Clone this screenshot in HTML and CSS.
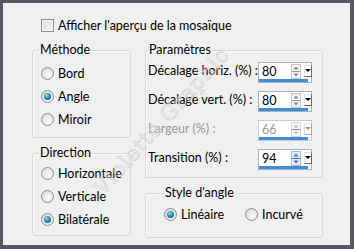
FILE: index.html
```html
<!DOCTYPE html>
<html lang="fr">
<head>
  <meta charset="UTF-8" />
  <meta name="viewport" content="width=device-width, initial-scale=1.0" />
  <title>Mosaïque</title>
  <link rel="stylesheet" href="styles.css">
</head>
<body>
  <div class="dialog">
    <div class="check-row"><span class="checkbox"></span>Afficher l'aperçu de la mosaïque</div>

    <div class="columns">
      <div class="col">
        <fieldset class="group group-method">
          <legend>Méthode</legend>
          <div class="option"><span class="radio"></span>Bord</div>
          <div class="option"><span class="radio checked"></span>Angle</div>
          <div class="option"><span class="radio"></span>Miroir</div>
        </fieldset>

        <fieldset class="group group-direction">
          <legend>Direction</legend>
          <div class="option"><span class="radio"></span>Horizontale</div>
          <div class="option"><span class="radio"></span>Verticale</div>
          <div class="option"><span class="radio checked"></span>Bilatérale</div>
        </fieldset>
      </div>

      <div class="col">
        <fieldset class="group group-params">
          <legend>Paramètres</legend>
          <div class="param">
            <span class="param-label">Décalage horiz. (%) :</span>
            <div class="spin">
              <span class="spin-value">80</span>
              <svg class="spin-arrows" viewBox="0 0 10 15" width="10" height="15"><rect x="0.5" y="0.5" width="9" height="14" fill="#f3f3f3" stroke="#c3c7cc"/><line x1="1" y1="7.5" x2="9" y2="7.5" stroke="#8e959d"/><path d="M2.5 5.5 L5 2.5 L7.5 5.5Z" fill="#7f8892"/><path d="M2.5 9.5 L5 12.5 L7.5 9.5Z" fill="#7f8892"/></svg>
              <span class="drop"></span>
            </div>
          </div>
          <div class="param">
            <span class="param-label">Décalage vert. (%) :</span>
            <div class="spin">
              <span class="spin-value">80</span>
              <svg class="spin-arrows" viewBox="0 0 10 15" width="10" height="15"><rect x="0.5" y="0.5" width="9" height="14" fill="#f3f3f3" stroke="#c3c7cc"/><line x1="1" y1="7.5" x2="9" y2="7.5" stroke="#8e959d"/><path d="M2.5 5.5 L5 2.5 L7.5 5.5Z" fill="#7f8892"/><path d="M2.5 9.5 L5 12.5 L7.5 9.5Z" fill="#7f8892"/></svg>
              <span class="drop"></span>
            </div>
          </div>
          <div class="param disabled">
            <span class="param-label">Largeur (%) :</span>
            <div class="spin">
              <span class="spin-value">66</span>
              <svg class="spin-arrows" viewBox="0 0 10 15" width="10" height="15"><rect x="0.5" y="0.5" width="9" height="14" fill="#f6f6f6" stroke="#d3d5d8"/><line x1="1" y1="7.5" x2="9" y2="7.5" stroke="#7d8fa6"/><path d="M2.5 5.5 L5 2.5 L7.5 5.5Z" fill="#b8c0c8"/><path d="M2.5 9.5 L5 12.5 L7.5 9.5Z" fill="#b8c0c8"/></svg>
              <span class="drop"></span>
            </div>
          </div>
          <div class="param">
            <span class="param-label">Transition (%) :</span>
            <div class="spin">
              <span class="spin-value">94</span>
              <svg class="spin-arrows" viewBox="0 0 10 15" width="10" height="15"><rect x="0.5" y="0.5" width="9" height="14" fill="#e4eef9" stroke="#a9c0dc"/><line x1="1" y1="7.5" x2="9" y2="7.5" stroke="#3d6eaf"/><path d="M2.5 5.5 L5 2.5 L7.5 5.5Z" fill="#3e74b8"/><path d="M2.5 9.5 L5 12.5 L7.5 9.5Z" fill="#3e74b8"/></svg>
              <span class="drop"></span>
            </div>
          </div>
        </fieldset>

        <fieldset class="group group-style">
          <legend>Style d'angle</legend>
          <div class="option-row">
            <div class="option option-first"><span class="radio checked"></span>Linéaire</div>
            <div class="option"><span class="radio"></span>Incurvé</div>
          </div>
        </fieldset>
      </div>
    </div>

    <div class="watermark">Violette Graphic</div>
  </div>
</body>
</html>
```

FILE: styles.css
```css
body {
  margin: 0;
  font-family: Lato, "Noto Sans", sans-serif;
  font-size: 12.5px;
  color: #000;
  background-color: #f0f0f0;
}
.dialog {
  position: relative;
  width: 354px;
  height: 249px;
  box-sizing: border-box;
  border: 3px solid #57566b;
  border-right-width: 4px;
  border-bottom-width: 4px;
  background-color: #f0f0f0;
  padding: 15px 27px 0 29px;
  overflow: hidden;
}
.check-row {
  display: flex;
  align-items: center;
  gap: 4px;
  height: 15px;
  margin-left: 9px;
}
.checkbox {
  width: 13px;
  height: 13px;
  box-sizing: border-box;
  border: 1px solid #8e8f8f;
  background: linear-gradient(135deg, #dcdcdc, #f8f8f8);
  box-shadow: inset 0 0 0 1px #f4f4f4;
}
.columns {
  display: grid;
  grid-template-columns: 99px 178px;
  column-gap: 14px;
  margin-top: 10px;
}
.col {
  display: flex;
  flex-direction: column;
  gap: 8px;
}
.group {
  margin: 0;
  min-width: 0;
  border: 1px solid #d5d9dd;
  border-radius: 3px;
  box-shadow: inset 1px 1px 0 #fbfbfb;
  padding: 0 8px;
}
.group legend {
  line-height: 14px;
  padding: 0 1px;
  margin-left: -2px;
}
.group-method {
  padding-top: 5px;
  padding-bottom: 6px;
}
.group-direction {
  padding-top: 2px;
  padding-bottom: 4px;
}
.option {
  display: flex;
  align-items: center;
  gap: 4px;
  height: 23px;
}
.radio {
  flex: none;
  position: relative;
  width: 13px;
  height: 13px;
  box-sizing: border-box;
  border-radius: 50%;
  border: 1px solid #8e8f8f;
  background: radial-gradient(circle at 60% 65%, #fafafa 0%, #e6e6e6 55%, #cfcfcf 100%);
}
.radio.checked::after {
  content: "";
  position: absolute;
  left: 2px;
  top: 2px;
  width: 7px;
  height: 7px;
  border-radius: 50%;
  background: radial-gradient(circle at 40% 35%, #8ee0f6 0%, #2a8cb6 45%, #114b6e 100%);
}
.group-params {
  display: flex;
  flex-direction: column;
  gap: 8px;
  padding: 5px 10px 7px 2px;
}
.group-params legend,
.group-style legend {
  margin-left: 0;
}
.param {
  display: flex;
  align-items: center;
  height: 21px;
}
.param-label {
  width: 110px;
  flex: none;
  margin-top: -4px;
  white-space: nowrap;
}
.spin {
  position: relative;
  display: flex;
  align-items: center;
  width: 54px;
  height: 21px;
  box-sizing: border-box;
  border: 1px solid #a9b1ba;
  background-color: #fff;
  padding: 0 0 3px 3px;
}
.spin::after {
  content: "";
  position: absolute;
  left: 0;
  right: 3px;
  bottom: 0;
  height: 3px;
  background-color: #3f8cd8;
}
.spin-value {
  flex: 1;
}
.spin-arrows {
  margin-right: 3px;
}
.drop {
  position: relative;
  width: 8px;
  height: 12px;
  box-sizing: border-box;
  background-color: #fdfdfd;
  border: 1px solid #e2e2e2;
  border-right-color: #6a6a6a;
  border-bottom-color: #6a6a6a;
  margin-right: -1px;
}
.drop::after {
  content: "";
  position: absolute;
  left: 0;
  top: 3px;
  border-left: 3px solid transparent;
  border-right: 3px solid transparent;
  border-top: 3px solid #000;
}
.disabled .param-label,
.disabled .spin-value {
  color: #9a9a9a;
}
.disabled .spin {
  border-color: #c8ccd0;
}
.disabled .drop {
  border-right-color: #a8a8a8;
  border-bottom-color: #a8a8a8;
}
.disabled .drop::after {
  border-top-color: #a0a0a0;
}
.group-style {
  padding: 3px 4px 11px 18px;
}
.option-row {
  display: flex;
}
.option-first {
  width: 81px;
}
.watermark {
  position: absolute;
  left: 95px;
  top: 175px;
  transform-origin: 0 14px;
  transform: rotate(-48deg);
  font-family: "DejaVu Serif", serif;
  font-size: 21px;
  line-height: 28px;
  letter-spacing: 1px;
  white-space: nowrap;
  color: transparent;
  -webkit-text-stroke: 0.6px #cfcfd2;
  pointer-events: none;
}
```
